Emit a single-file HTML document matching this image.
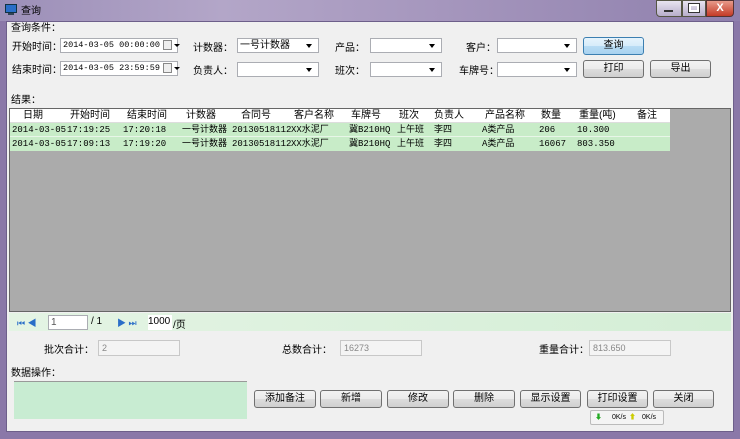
<!DOCTYPE html>
<html><head><meta charset="utf-8"><style>
*{margin:0;padding:0;box-sizing:border-box}
body{width:740px;height:439px;overflow:hidden;background:#8a78a8;font-family:"Liberation Sans","Noto Sans CJK SC",sans-serif;font-size:10px;color:#000;position:relative}
.a{position:absolute;white-space:nowrap}
.title{left:0;top:0;width:740px;height:21px;background:linear-gradient(90deg,#9c8fb8,#b3a6c8 30%,#a596bd 60%,#8f80ad);}
.inner{left:6px;top:21px;width:728px;height:411px;background:#f0f0f0;border:1px solid #6d5f8a}
.in{background:#fff;border:1px solid #abadb3;height:15px;font-size:10px;line-height:13px;padding-left:2px;overflow:hidden}
.mono{font-family:"Liberation Mono","Noto Sans CJK SC",monospace;font-size:8.5px}
.dd::after{content:"";position:absolute;right:6px;top:5px;border-left:3px solid transparent;border-right:3px solid transparent;border-top:4px solid #000}
.btn{border:1px solid #707070;border-radius:3px;background:linear-gradient(#f2f2f2,#ebebeb 50%,#dddddd 51%,#cfcfcf);text-align:center;font-size:10px;line-height:16px}
.grid{left:9px;top:108px;width:722px;height:204px;background:#ababab;border:1px solid #666}
.row{position:absolute;left:0;height:14px;width:660px;font-size:9px;line-height:14px;font-family:"Liberation Mono","Noto Sans CJK SC",monospace}
.row span{position:absolute;top:0;white-space:nowrap}
.hd span{font-family:"Liberation Sans","Noto Sans CJK SC",sans-serif;font-size:10px}
.dis{background:#f4f4f4;border:1px solid #c8c8c8;height:16px;color:#888;font-size:9px;line-height:14px;padding-left:3px}
</style></head><body>
<div class="a title"></div>
<div class="a" style="left:5px;top:4px;width:12px;height:9px;background:#2a6ec8;border:1px solid #134;"></div>
<div class="a" style="left:8px;top:13px;width:6px;height:2px;background:#345"></div>
<div class="a" style="left:21px;top:2px;font-size:10px">查询</div>
<div class="a" style="left:656px;top:0;width:26px;height:17px;background:linear-gradient(#e8e4f0,#b8aecb);border:1px solid #554;border-radius:0 0 0 4px"></div>
<div class="a" style="left:664px;top:10px;width:9px;height:2px;background:#fff;border:1px solid #333"></div>
<div class="a" style="left:682px;top:0;width:24px;height:17px;background:linear-gradient(#e8e4f0,#b8aecb);border:1px solid #554"></div>
<div class="a" style="left:689px;top:4px;width:10px;height:8px;border:2px solid #fff;outline:1px solid #333"></div>
<div class="a" style="left:706px;top:0;width:28px;height:17px;background:linear-gradient(#e89a8a,#c43a26);border:1px solid #533;border-radius:0 0 4px 0;color:#fff;text-align:center;font-weight:bold;font-size:11px;line-height:15px">X</div>
<div class="a inner"></div>
<div class="a" style="left:11px;top:19px">查询条件：</div>
<div class="a" style="left:12px;top:38px">开始时间：</div>
<div class="a in mono" style="left:60px;top:38px;width:118px">2014-03-05 00:00:00</div>
<div class="a" style="left:163px;top:40px;width:9px;height:10px;border:1px solid #888;background:#eee"></div>
<div class="a" style="left:174px;top:44px;border-left:3px solid transparent;border-right:3px solid transparent;border-top:3px solid #000"></div>
<div class="a" style="left:12px;top:61px">结束时间：</div>
<div class="a in mono" style="left:60px;top:61px;width:118px">2014-03-05 23:59:59</div>
<div class="a" style="left:163px;top:63px;width:9px;height:10px;border:1px solid #888;background:#eee"></div>
<div class="a" style="left:174px;top:67px;border-left:3px solid transparent;border-right:3px solid transparent;border-top:3px solid #000"></div>
<div class="a" style="left:193px;top:39px">计数器：</div>
<div class="a in dd" style="left:237px;top:38px;width:82px">一号计数器</div>
<div class="a" style="left:193px;top:62px">负责人：</div>
<div class="a in dd" style="left:237px;top:62px;width:82px"></div>
<div class="a" style="left:335px;top:39px">产品：</div>
<div class="a in dd" style="left:370px;top:38px;width:72px"></div>
<div class="a" style="left:335px;top:62px">班次：</div>
<div class="a in dd" style="left:370px;top:62px;width:72px"></div>
<div class="a" style="left:466px;top:39px">客户：</div>
<div class="a in dd" style="left:497px;top:38px;width:80px"></div>
<div class="a" style="left:459px;top:62px">车牌号：</div>
<div class="a in dd" style="left:497px;top:62px;width:80px"></div>
<div class="a btn" style="left:583px;top:37px;width:61px;height:18px;background:linear-gradient(#e6f4fc,#d6ecfa 50%,#b8dcf4 51%,#a8d2f0);border-color:#3c7fb1">查询</div>
<div class="a btn" style="left:583px;top:60px;width:61px;height:18px">打印</div>
<div class="a btn" style="left:650px;top:60px;width:61px;height:18px">导出</div>
<div class="a" style="left:11px;top:91px">结果：</div>
<div class="a grid">
 <div class="row hd" style="top:0;background:#fff;border-bottom:1px solid #ddd">
  <span style="left:13px">日期</span><span style="left:60px">开始时间</span><span style="left:117px">结束时间</span><span style="left:176px">计数器</span><span style="left:231px">合同号</span><span style="left:284px">客户名称</span><span style="left:341px">车牌号</span><span style="left:389px">班次</span><span style="left:424px">负责人</span><span style="left:475px">产品名称</span><span style="left:531px">数量</span><span style="left:569px">重量(吨)</span><span style="left:627px">备注</span>
 </div>
 <div class="row" style="top:14px;background:#c8ecc8;border-bottom:1px solid #e8f6e8"><span style="left:2px">2014-03-05</span><span style="left:57px">17:19:25</span><span style="left:113px">17:20:18</span><span style="left:172px">一号计数器</span><span style="left:222px">20130518112</span><span style="left:281px">XX水泥厂</span><span style="left:339px">冀B210HQ</span><span style="left:387px">上午班</span><span style="left:424px">李四</span><span style="left:472px">A类产品</span><span style="left:529px">206</span><span style="left:567px">10.300</span></div>
 <div class="row" style="top:28px;background:#c8ecc8"><span style="left:2px">2014-03-05</span><span style="left:57px">17:09:13</span><span style="left:113px">17:19:20</span><span style="left:172px">一号计数器</span><span style="left:222px">20130518112</span><span style="left:281px">XX水泥厂</span><span style="left:339px">冀B210HQ</span><span style="left:387px">上午班</span><span style="left:424px">李四</span><span style="left:472px">A类产品</span><span style="left:529px">16067</span><span style="left:567px">803.350</span></div>
</div>
<div class="a" style="left:9px;top:313px;width:722px;height:18px;background:linear-gradient(90deg,#e4f4e4,#d4eed6);"></div>
<div class="a" style="left:17px;top:316px;color:#2a6ec8;font-size:9px">⏮ ◀</div>
<div class="a in" style="left:48px;top:315px;width:40px;color:#555">1</div>
<div class="a" style="left:91px;top:316px">/ 1</div>
<div class="a" style="left:117px;top:316px;color:#2a6ec8;font-size:9px">▶ ⏭</div>
<div class="a" style="left:148px;top:315px;width:24px;height:15px;background:#fff;font-size:10px;line-height:14px;overflow:hidden">1000</div>
<div class="a" style="left:173px;top:316px">/页</div>
<div class="a" style="left:44px;top:341px">批次合计：</div>
<div class="a dis" style="left:98px;top:340px;width:82px">2</div>
<div class="a" style="left:282px;top:341px">总数合计：</div>
<div class="a dis" style="left:340px;top:340px;width:82px">16273</div>
<div class="a" style="left:539px;top:341px">重量合计：</div>
<div class="a dis" style="left:589px;top:340px;width:82px">813.650</div>
<div class="a" style="left:11px;top:364px">数据操作：</div>
<div class="a" style="left:14px;top:381px;width:233px;height:38px;background:#c8ecd2;border-top:1px solid #999"></div>
<div class="a btn" style="left:254px;top:390px;width:62px;height:18px">添加备注</div>
<div class="a btn" style="left:320px;top:390px;width:62px;height:18px">新增</div>
<div class="a btn" style="left:387px;top:390px;width:62px;height:18px">修改</div>
<div class="a btn" style="left:453px;top:390px;width:62px;height:18px">删除</div>
<div class="a btn" style="left:520px;top:390px;width:61px;height:18px">显示设置</div>
<div class="a btn" style="left:587px;top:390px;width:61px;height:18px">打印设置</div>
<div class="a btn" style="left:653px;top:390px;width:61px;height:18px">关闭</div>
<div class="a" style="left:590px;top:410px;width:74px;height:15px;background:#f4f4f4;border:1px solid #bbb;border-radius:2px;font-size:7px;line-height:13px"><span style="color:#2a2;margin-left:4px">⬇</span><span style="margin-left:10px">0K/s</span><span style="color:#cc0;margin-left:3px">⬆</span><span style="margin-left:6px">0K/s</span></div>
</body></html>
